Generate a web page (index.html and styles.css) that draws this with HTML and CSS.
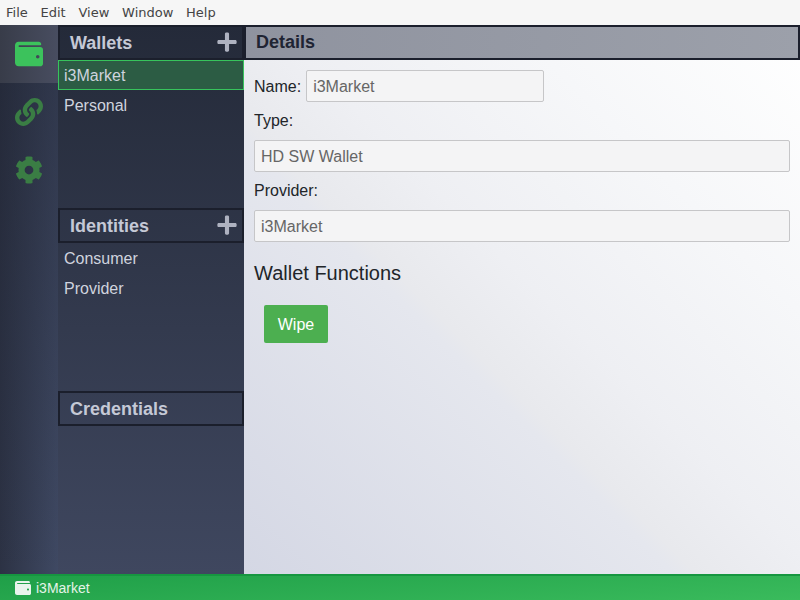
FILE: index.html
```html
<!DOCTYPE html>
<html>

<head>
    <title>i3Market Wallet</title>
    <link rel="stylesheet" href="styles.css">
</head>

<body>
    <svg class="icon-defs" width="0" height="0">
        <symbol id="wallet" viewBox="0 0 512 512">
            <path d="M461.2 128H80c-8.84 0-16-7.16-16-16s7.16-16 16-16h384c8.84 0 16-7.16 16-16 0-26.51-21.49-48-48-48H64C28.65 32 0 60.65 0 96v320c0 35.35 28.65 64 64 64h397.2c28.02 0 50.8-21.53 50.8-48V176c0-26.47-22.78-48-50.8-48zM416 336c-17.67 0-32-14.33-32-32s14.33-32 32-32 32 14.33 32 32-14.33 32-32 32z" />
        </symbol>
        <symbol id="plus" viewBox="0 0 448 512">
            <path d="M416 208H272V64c0-17.67-14.33-32-32-32h-32c-17.67 0-32 14.33-32 32v144H32c-17.67 0-32 14.33-32 32v32c0 17.67 14.33 32 32 32h144v144c0 17.67 14.33 32 32 32h32c17.67 0 32-14.33 32-32V304h144c17.67 0 32-14.33 32-32v-32c0-17.67-14.33-32-32-32z" />
        </symbol>
    </svg>

    <div class="menubar">
        <span>File</span>
        <span>Edit</span>
        <span>View</span>
        <span>Window</span>
        <span>Help</span>
    </div>

    <div class="app">
        <nav class="rail">
            <div class="rail-item active">
                <svg class="rail-icon" width="28" height="28"><use href="#wallet" /></svg>
            </div>
            <div class="rail-item">
                <svg class="rail-icon" viewBox="0 0 512 512" width="28" height="28">
                    <path d="M326.612 185.391c59.747 59.809 58.927 155.698.36 214.59-.11.12-.24.25-.36.37l-67.2 67.2c-59.27 59.27-155.699 59.262-214.96 0-59.27-59.26-59.27-155.7 0-214.96l37.106-37.106c9.84-9.84 26.786-3.3 27.294 10.606.648 17.722 3.826 35.527 9.69 52.721 1.986 5.822.567 12.262-3.783 16.612l-13.087 13.087c-28.026 28.026-28.905 73.66-1.155 101.96 28.024 28.579 74.086 28.749 102.325.51l67.2-67.19c28.191-28.191 28.073-73.757 0-101.83-3.701-3.694-7.429-6.564-10.341-8.569a16.037 16.037 0 0 1-6.947-12.606c-.396-10.567 3.348-21.456 11.698-29.806l21.054-21.055c5.521-5.521 14.182-6.199 20.584-1.731a152.482 152.482 0 0 1 20.522 17.197zM467.547 44.449c-59.261-59.262-155.69-59.27-214.96 0l-67.2 67.2c-.12.12-.25.25-.36.37-58.566 58.892-59.387 154.781.36 214.59a152.454 152.454 0 0 0 20.521 17.196c6.402 4.468 15.064 3.789 20.584-1.731l21.054-21.055c8.35-8.35 12.094-19.239 11.698-29.806a16.037 16.037 0 0 0-6.947-12.606c-2.912-2.005-6.64-4.875-10.341-8.569-28.073-28.073-28.191-73.639 0-101.83l67.2-67.19c28.239-28.239 74.3-28.069 102.325.51 27.75 28.3 26.872 73.934-1.155 101.96l-13.087 13.087c-4.35 4.35-5.769 10.79-3.783 16.612 5.864 17.194 9.042 34.999 9.69 52.721.509 13.906 17.454 20.446 27.294 10.606l37.106-37.106c59.271-59.259 59.271-155.699.001-214.959z" />
                </svg>
            </div>
            <div class="rail-item">
                <svg class="rail-icon" viewBox="0 0 512 512" width="28" height="28">
                    <path d="M487.4 315.7l-42.6-24.6c4.3-23.2 4.3-47 0-70.2l42.6-24.6c4.9-2.8 7.1-8.6 5.5-14-11.1-35.6-30-67.8-54.7-94.6-3.8-4.1-10-5.1-14.8-2.3L380.8 110c-17.9-15.4-38.5-27.3-60.8-35.1V25.8c0-5.6-3.9-10.5-9.4-11.7-36.7-8.2-74.3-7.8-109.2 0-5.5 1.2-9.4 6.1-9.4 11.7V75c-22.2 7.9-42.8 19.8-60.8 35.1L88.7 85.5c-4.9-2.8-11-1.9-14.8 2.3-24.7 26.7-43.6 58.9-54.7 94.6-1.7 5.4.6 11.2 5.5 14L67.3 221c-4.3 23.2-4.3 47 0 70.2l-42.6 24.6c-4.9 2.8-7.1 8.6-5.5 14 11.1 35.6 30 67.8 54.7 94.6 3.8 4.1 10 5.1 14.8 2.3l42.6-24.6c17.9 15.4 38.5 27.3 60.8 35.1v49.2c0 5.6 3.9 10.5 9.4 11.7 36.7 8.2 74.3 7.8 109.2 0 5.5-1.2 9.4-6.1 9.4-11.7v-49.2c22.2-7.9 42.8-19.8 60.8-35.1l42.6 24.6c4.9 2.8 11 1.9 14.8-2.3 24.7-26.7 43.6-58.9 54.7-94.6 1.5-5.5-.7-11.3-5.6-14.1zM256 336c-44.1 0-80-35.9-80-80s35.9-80 80-80 80 35.9 80 80-35.9 80-80 80z" />
                </svg>
            </div>
        </nav>

        <div class="lists">
            <section class="list-section">
                <div class="section-header">
                    <span>Wallets</span>
                    <svg class="add-icon" width="20" height="22"><use href="#plus" /></svg>
                </div>
                <div class="list-item selected">i3Market</div>
                <div class="list-item">Personal</div>
            </section>
            <section class="list-section">
                <div class="section-header">
                    <span>Identities</span>
                    <svg class="add-icon" width="20" height="22"><use href="#plus" /></svg>
                </div>
                <div class="list-item">Consumer</div>
                <div class="list-item">Provider</div>
            </section>
            <section class="list-section">
                <div class="section-header">
                    <span>Credentials</span>
                </div>
            </section>
        </div>

        <main class="details">
            <div class="details-header">Details</div>
            <div class="details-body">
                <div class="field-inline">
                    <label for="name">Name:</label>
                    <input type="text" id="name" class="name-input" value="i3Market" disabled>
                </div>
                <div class="field-label"><label for="type">Type:</label></div>
                <input type="text" id="type" value="HD SW Wallet" disabled>
                <div class="field-label"><label for="provider">Provider:</label></div>
                <input type="text" id="provider" value="i3Market" disabled>
                <h3>Wallet Functions</h3>
                <button class="wipe">Wipe</button>
            </div>
        </main>
    </div>

    <div class="statusbar">
        <svg class="status-icon" width="16" height="16"><use href="#wallet" /></svg>
        <span>i3Market</span>
    </div>
</body>

</html>
```

FILE: styles.css
```css
html,
body {
    height: 100%;
}

body {
    margin: 0;
    display: flex;
    flex-direction: column;
    overflow: hidden;
    font-family: "Liberation Sans", Arial, sans-serif;
    font-size: 16px;
    color: #212529;
    background-color: #1b1f2c;
}

.icon-defs {
    position: absolute;
}

.menubar {
    flex: 0 0 25px;
    box-sizing: border-box;
    display: flex;
    gap: 12.75px;
    align-items: center;
    padding: 0 6px 1px;
    font-family: "DejaVu Sans", sans-serif;
    font-size: 13px;
    color: #444;
    background-color: #f6f6f6;
}

.app {
    flex: 1;
    min-height: 0;
    display: flex;
}

/* icon strip on the left */
.rail {
    flex: 0 0 58px;
    background: linear-gradient(to bottom, rgba(27, 31, 44, 0.45), rgba(27, 31, 44, 0) 100%),
        linear-gradient(to right, #2c3244, #3f4963);
}

.rail-item {
    height: 58px;
    display: flex;
    align-items: center;
    justify-content: center;
}

.rail-item.active {
    background: linear-gradient(to right, #383c49, #484d60);
}

.rail-icon {
    fill: #3a7d44;
}

.active .rail-icon {
    fill: #3cc25c;
}

/* wallets, identities, credentials */
.lists {
    flex: 0 0 186px;
    display: grid;
    grid-template-rows: repeat(3, 1fr);
    background: linear-gradient(to bottom, #242a39, #3f475f);
    color: #cfd3de;
}

.section-header {
    height: 35px;
    box-sizing: border-box;
    display: flex;
    align-items: center;
    justify-content: space-between;
    padding: 0 5px 0 10px;
    border: 2px solid #1b1f2c;
    font-size: 18px;
    font-weight: bold;
    color: #c5c9d6;
}

.section-header span {
    margin-top: 1px;
}

.add-icon {
    margin-bottom: 2px;
    fill: #aeb2c0;
}

.list-item {
    height: 30px;
    box-sizing: border-box;
    padding: 1px 6px 0;
    line-height: 30px;
}

.list-item.selected {
    line-height: 28px;
    border: 1px solid #37c35c;
    padding: 1px 5px 0;
    background-color: #2c5c44;
}

.details {
    flex: 1;
    display: flex;
    flex-direction: column;
    background: linear-gradient(225deg, #ffffff 0%, #f6f7f9 26%, #eeeff3 48%, #e8e9ed 59%, #e5e7ee 61%, #d4d7e4 100%);
}

.details-header {
    height: 35px;
    box-sizing: border-box;
    padding-left: 10px;
    border: 2px solid #1b1f2c;
    line-height: 31px;
    font-size: 18px;
    font-weight: bold;
    color: #1f2433;
    background: linear-gradient(to right, #8f939f, #9ca0aa);
}

.details-body {
    padding: 10px 10px 0;
}

.field-inline {
    display: flex;
    align-items: center;
    gap: 5px;
}

.field-inline label {
    padding-top: 2px;
}

.field-label {
    height: 38px;
    line-height: 38px;
}

input[type="text"] {
    display: block;
    width: 100%;
    height: 32px;
    box-sizing: border-box;
    padding: 2px 6px 0;
    border: 1px solid #c6c6c8;
    border-radius: 2px;
    font-family: inherit;
    font-size: 16px;
    color: #666;
    background-color: #f4f4f5;
}

input.name-input {
    width: 238px;
}

h3 {
    margin: 19px 0 0;
    font-size: 20px;
    font-weight: normal;
    line-height: 24px;
}

.wipe {
    display: block;
    width: 64px;
    height: 38px;
    margin: 20px 0 0 10px;
    padding: 2px 0 0;
    border: none;
    border-radius: 2px;
    font-family: inherit;
    font-size: 16px;
    color: #fff;
    background-color: #4caf50;
}

.statusbar {
    flex: 0 0 26px;
    box-sizing: border-box;
    display: flex;
    align-items: center;
    gap: 5px;
    padding-left: 15px;
    border-top: 2px solid #169640;
    font-size: 14px;
    color: #e4f3e8;
    background: linear-gradient(175deg, #1f9f48, #3abb5c);
}

.status-icon {
    fill: #e9f4ec;
}
```
